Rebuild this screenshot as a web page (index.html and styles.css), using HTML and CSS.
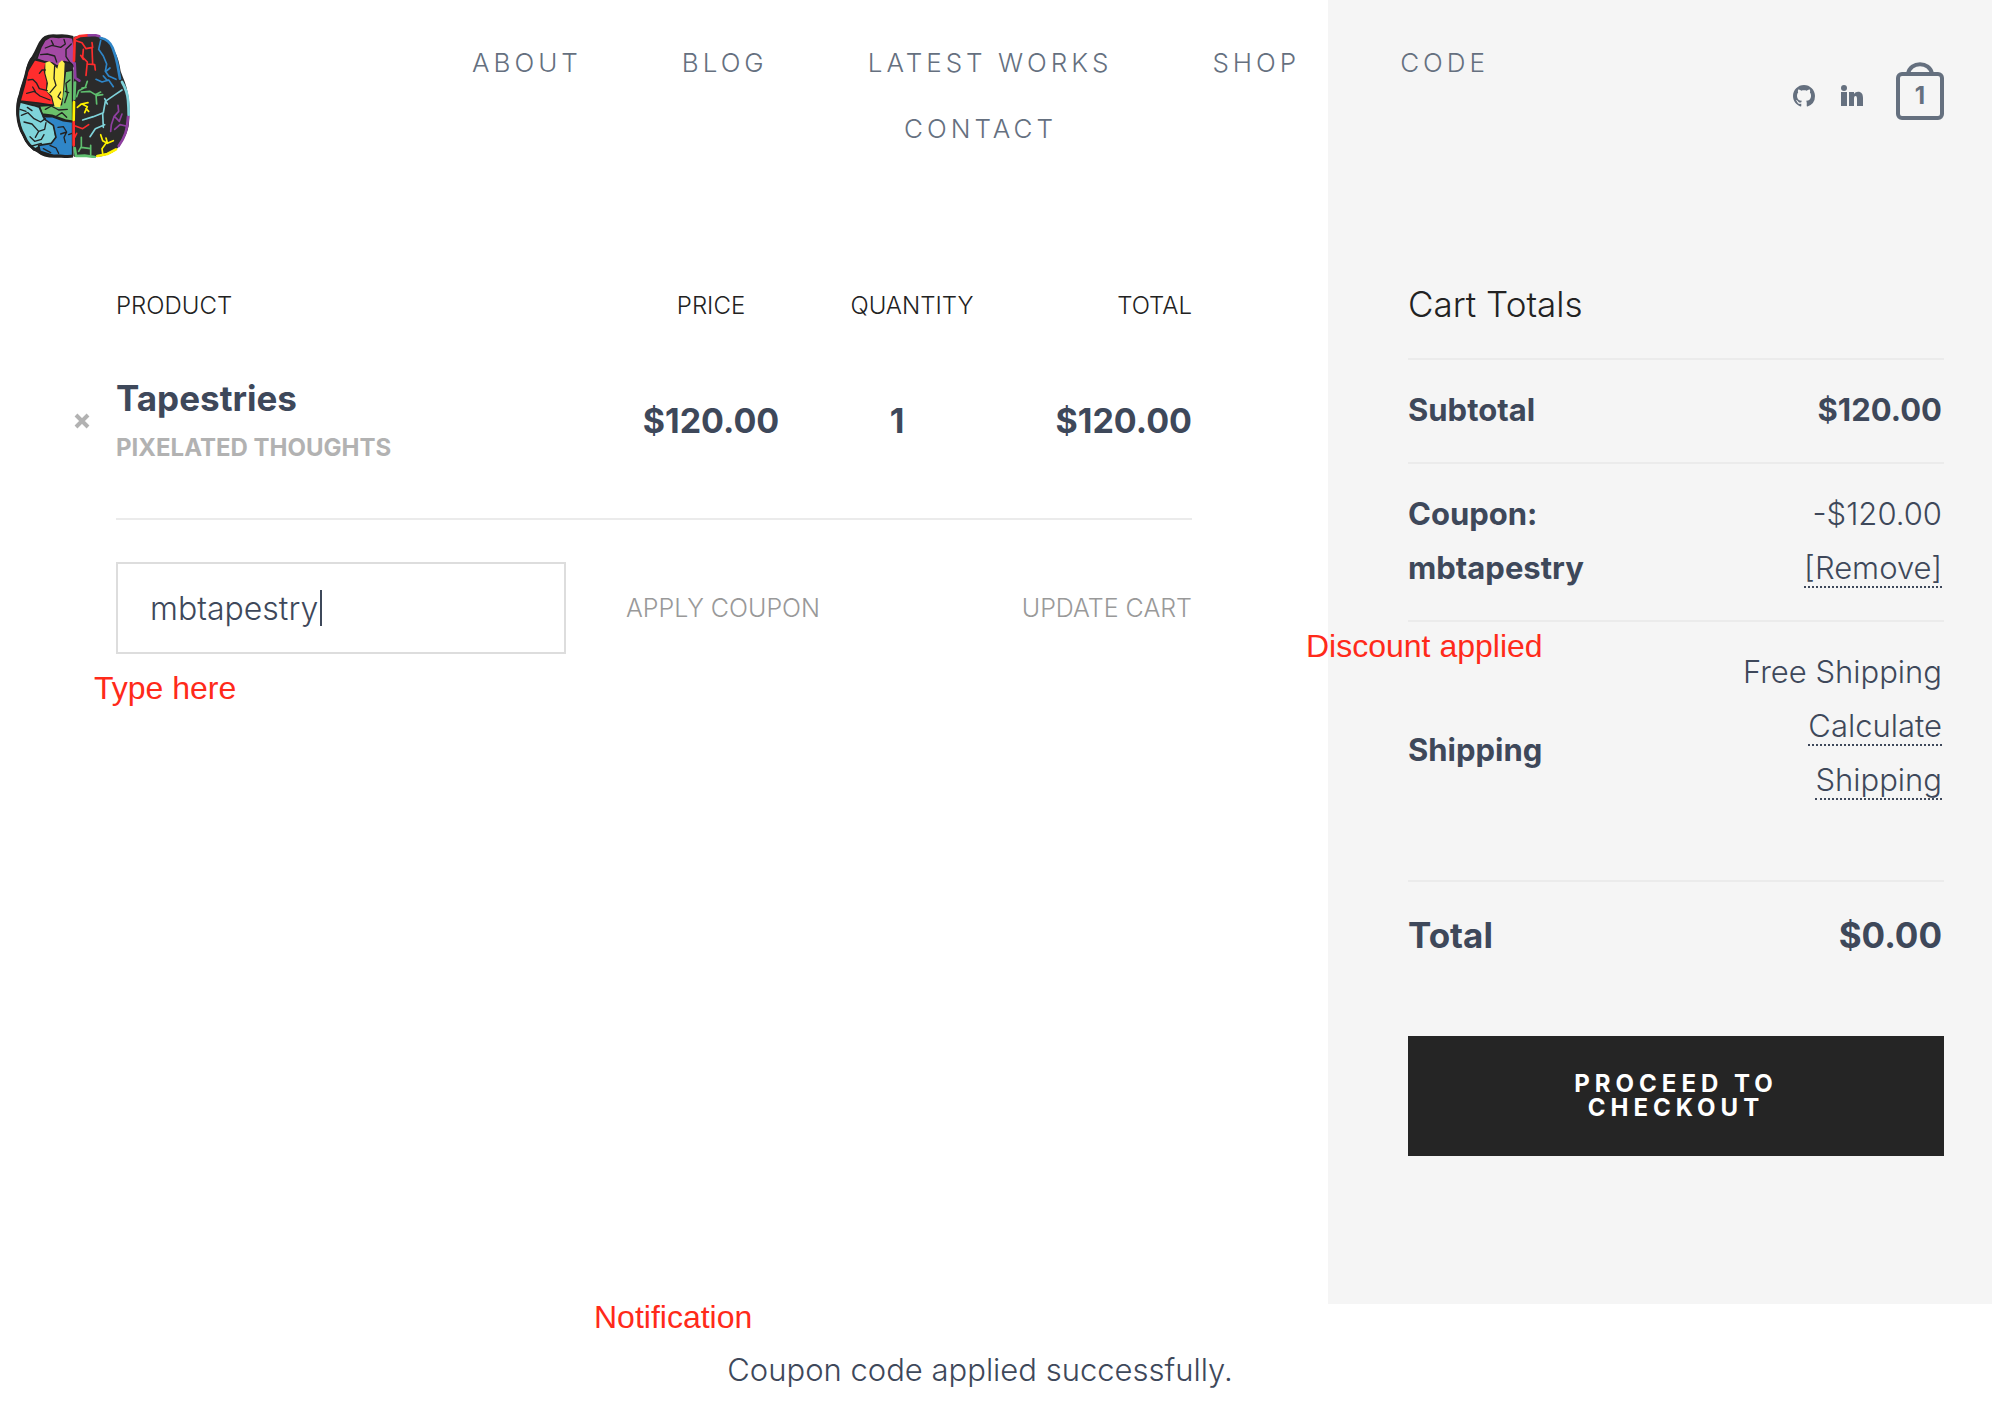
FILE: index.html
```
<!DOCTYPE html>
<html lang="en">
<head>
    <meta charset="UTF-8">
    <meta name="viewport" content="width=device-width, initial-scale=1.0">
    <title>Cart</title>
    <link rel="stylesheet" href="styles.css">
</head>
<body>
    <div class="page">
        <header class="site-header">
            <a href="/" class="logo" aria-label="Home">
                <svg width="114" height="124" viewBox="48 42 342 372">
                    <!-- left half -->
                    <path fill="#2b2b2b" d="M220 50C200 44 185 44 170 46C145 42 128 50 120 66C112 78 108 92 98 108C84 122 80 140 76 160C72 180 62 200 58 222C50 240 48 260 50 284C52 310 58 330 68 346C76 368 90 386 112 396C126 408 150 414 175 410C192 413 206 410 220 408z"/>
                    <g stroke="#222" stroke-width="5" stroke-linejoin="round">
                        <path fill="#a349a4" d="M218 52l-20-3-22 3-22-3-20 12-12 22-12 34 24 8 22 4 16 10 20-14 20 4 24 26z"/>
                        <path fill="#ff2d2d" d="M104 119l34 8-4 28 8 30-2 26 16 20 6 26-48-8-54-6 14-50 8-38z"/>
                        <path fill="#6bc06b" d="M218 150l-22 4-6 50-6 50-66 4 8 24 30 4 40 14 22 4z"/>
                        <path fill="#7fd3da" d="M60 246l40 10 18 6 12 28 30 10 8 52-14 22-34 4-18 12-22-24-16-32-10-40 2-30z"/>
                        <path fill="#2f86c8" d="M130 290l28 0 32 12 28 4v102l-60-2-38-12-4-18 38-6 14-18-8-36-26-18z"/>
                    </g>
                    <path fill="#fff04d" d="M136 128l12-4 14 12 10 10 4-16 10-9 8 9-2 40-4 60-8 32-16-2-8-32-16-14 4-24-8-30z"/>
                    <path fill="none" stroke="#222" stroke-width="9" stroke-linejoin="round" d="M219 52C200 46 185 46 170 48C145 45 130 52 122 67C114 80 110 94 100 110C87 124 83 142 79 161C75 181 65 201 61 223C54 241 52 260 53 283C55 309 61 329 71 345C79 366 92 384 114 393C128 405 150 410 175 408C192 411 206 409 219 408"/>
                    <g fill="none" stroke="#222" stroke-width="4" stroke-linecap="round" stroke-linejoin="round">
                        <path d="M136 84l20-8 26 6 14-10-4-14M122 104l20-2 22 6 6 18M214 72l-16 16 0 22 12 18M160 74l-6-12"/>
                        <path d="M118 160l8-10 10 0M84 180l14-2 12 12 8 16 24 6M80 220l22-6 18 14 30 12M106 215l-8-14"/>
                        <path d="M164 138l-2 38 6 20-18 22M182 216l-8 14 8 8M210 180l-12 10 4 34-8 24M196 214l10 4"/>
                        <path d="M136 268l18-10 22 12 26-2M170 288l16-10 14 14"/>
                        <path d="M64 286l20-8 18 18 20 10 14-10M72 306l24 6 20 22-10 18M116 334l18-6 4-20M90 350l14 14 20-6 8-14M96 378l28-8M60 268l18 6M82 262l14 10"/>
                        <path d="M174 322l16-2 10 16-8 16 4 16M182 342l18-6M150 376l18 8 8 16M130 386l22 12M206 344l10-4"/>
                    </g>
                    <!-- right half -->
                    <path fill="#2b2b2b" d="M222 50C250 42 280 44 300 50C322 58 338 74 344 94C354 112 358 130 362 154C370 176 380 196 384 222C390 250 390 290 386 318C380 344 370 362 356 380C344 398 322 406 296 410L222 410z"/>
                    <g fill="none" stroke-width="8" stroke-linecap="round" stroke-linejoin="round">
                        <path stroke="#ff2d2d" d="M222 122l2-66 16-8 22-2M221 306v70"/>
                        <path stroke="#8e3fa0" d="M266 46l18-1 14 4M224 130l2 44 12 8M384 290Q382 322 376 340T356 378"/>
                        <path stroke="#2f86c8" d="M302 54Q328 58 338 84T352 132T360 176"/>
                        <path stroke="#7fd3da" d="M366 186Q382 214 384 240T386 284"/>
                        <path stroke="#5fbf6f" d="M225 188l-2 48M224 384l4 24 26-1 30 4"/>
                        <path stroke="#fff200" d="M222 246l-1 54M292 408l30-6 26-14"/>
                    </g>
                    <g fill="none" stroke-width="5" stroke-linecap="round" stroke-linejoin="round">
                        <path stroke="#ff2d2d" d="M228 62l18 6 12 18 20-4-2-14M250 88l-2 24 14 14-4 40M262 132l22 2 2 16M250 118l-8-12M276 84l2 48M226 318l22 8 18-12M230 340l-6 12"/>
                        <path stroke="#2f86c8" d="M302 62l-6 26 14 20 10 24-4 22 10 14 22 10M318 154l12-10M288 178l18 8 20-6 14 20M322 182l-12-14"/>
                        <path stroke="#5fbf6f" d="M262 184l-6 18-20 10-6 18M244 216l26-2 16 10 16-8M288 224l2 28M292 226l16-2M258 202l-12 2M244 352l0 28-8 14M244 382l28 4 0 18M272 386v-10"/>
                        <path stroke="#fff200" d="M232 262l12-10 20-4M246 252l16 8-8 18M258 266l8 8M302 344l6 18 14 8 18-8M318 370l-12 16 2 14M322 368l-4-14"/>
                        <path stroke="#7fd3da" d="M366 210l-24 16-26 18-6 34-30 12-32 10M308 280l2 42M314 314l-28 12-16 24M322 252l-8-16"/>
                        <path stroke="#8e3fa0" d="M354 256l2 18-14 16-8 24-2 20M344 290l14 14 8-22M378 318l-18-4-16 14"/>
                    </g>
                </svg>
            </a>
            <nav class="main-nav">
                <a href="/about">ABOUT</a>
                <a href="/blog">BLOG</a>
                <a href="/latest-works">LATEST WORKS</a>
                <a href="/shop">SHOP</a>
                <a href="/code">CODE</a>
                <a href="/contact">CONTACT</a>
            </nav>
            <div class="header-icons">
                <a href="/github" aria-label="GitHub">
                    <svg width="22" height="22" viewBox="0 0 16 16" fill="currentColor"><path d="M8 0C3.58 0 0 3.58 0 8c0 3.54 2.29 6.53 5.47 7.59.4.07.55-.17.55-.38 0-.19-.01-.82-.01-1.49-2.01.37-2.53-.49-2.69-.94-.09-.23-.48-.94-.82-1.13-.28-.15-.68-.52-.01-.53.63-.01 1.08.58 1.23.82.72 1.21 1.87.87 2.33.66.07-.52.28-.87.51-1.07-1.78-.2-3.64-.89-3.64-3.95 0-.87.31-1.59.82-2.15-.08-.2-.36-1.02.08-2.12 0 0 .67-.21 2.2.82.64-.18 1.32-.27 2-.27s1.36.09 2 .27c1.53-1.04 2.2-.82 2.2-.82.44 1.1.16 1.92.08 2.12.51.56.82 1.27.82 2.15 0 3.07-1.87 3.75-3.65 3.95.29.25.54.73.54 1.48 0 1.07-.01 1.93-.01 2.2 0 .21.15.46.55.38A8.01 8.01 0 0 0 16 8c0-4.42-3.58-8-8-8z"/></svg>
                </a>
                <a href="/linkedin" aria-label="LinkedIn">
                    <svg width="22" height="22" viewBox="0 0 22 22" fill="currentColor"><circle cx="3" cy="3" r="3"/><path d="M0 7h6v14H0zM8 7h5v2c1-1.600 2.500-2.300 4-2.300 3.600 0 5 2.300 5 6.300v8h-6v-7c0-2-.4-3-1.500-3S13 12 13 14v7H8z"/></svg>
                </a>
                <a href="/cart" class="bag" aria-label="Cart">
                    <svg width="48" height="68" viewBox="0 0 48 68" fill="none" stroke="currentColor" stroke-width="4"><rect x="2" y="12" width="44" height="44" rx="4"/><path d="M12 12C14 -1 34 -1 36 12"/></svg>
                    <span class="bag-count">1</span>
                </a>
            </div>
        </header>

        <div class="cart">
            <main class="cart-items">
                <table class="products">
                    <colgroup>
                        <col class="col-remove">
                        <col class="col-product">
                        <col class="col-price">
                        <col class="col-quantity">
                        <col class="col-total">
                    </colgroup>
                    <tr>
                        <td></td>
                        <th>PRODUCT</th>
                        <th class="center">PRICE</th>
                        <th class="center">QUANTITY</th>
                        <th class="right">TOTAL</th>
                    </tr>
                    <tr class="item">
                        <td class="remove">
                            <button type="button" aria-label="Remove item">
                                <svg width="16" height="16" viewBox="0 0 16 16" stroke="currentColor" stroke-width="4"><path d="M2 2l12 12M14 2L2 14"/></svg>
                            </button>
                        </td>
                        <td>
                            <a href="/shop/tapestries" class="item-name">Tapestries</a>
                            <div class="vendor">PIXELATED THOUGHTS</div>
                        </td>
                        <td class="figure center">$120.00</td>
                        <td class="figure quantity center">1</td>
                        <td class="figure right">$120.00</td>
                    </tr>
                </table>
                <form class="coupon">
                    <div class="coupon-field">
                        <input type="text" name="coupon_code" aria-label="Coupon code" value="mbtapestry">
                    </div>
                    <button type="button">APPLY COUPON</button>
                    <button type="button" class="update">UPDATE CART</button>
                    <span class="note note-type">Type here</span>
                </form>
            </main>

            <aside class="totals">
                <h2>Cart Totals</h2>
                <table>
                    <tr>
                        <th>Subtotal</th>
                        <td><strong>$120.00</strong></td>
                    </tr>
                    <tr>
                        <th>Coupon: mbtapestry</th>
                        <td>-$120.00<br><a href="#remove">[Remove]</a></td>
                    </tr>
                    <tr class="shipping">
                        <th>Shipping</th>
                        <td>Free Shipping<br><a href="#calculate">Calculate<br>Shipping</a></td>
                    </tr>
                    <tr class="total">
                        <th>Total</th>
                        <td>$0.00</td>
                    </tr>
                </table>
                <button type="button" class="checkout">PROCEED TO CHECKOUT</button>
                <span class="note note-discount">Discount applied</span>
            </aside>
        </div>
    </div>

    <div class="notice">
        <span class="note note-notification">Notification</span>
        <p>Coupon code applied successfully.</p>
    </div>
</body>
</html>
```
FILE: styles.css
```
* {
    box-sizing: border-box;
}
body {
    margin: 0;
    font-family: Inter, "Liberation Sans", sans-serif;
    font-size: 31px;
    font-weight: 300;
    color: #3e485a;
    background-color: #fff;
}
a {
    color: inherit;
    text-decoration: none;
}
button {
    font: inherit;
    color: inherit;
    background: none;
    border: none;
    padding: 0;
    cursor: pointer;
}
svg {
    display: block;
}
/* grey sidebar runs up behind the header */
.page {
    background: linear-gradient(to right, #fff 66.667%, #f5f5f5 66.667%);
}

/* header */
.site-header {
    display: flex;
    align-items: center;
    padding: 30px 48px 30px 16px;
    color: #65707f;
}
.main-nav {
    flex: 1;
    display: flex;
    flex-wrap: wrap;
    justify-content: center;
    padding: 0 240px 0 278px;
}
.main-nav a {
    padding: 0 50px;
    font-size: 26px;
    line-height: 66px;
    letter-spacing: 4px;
}
.header-icons {
    display: flex;
    align-items: center;
    gap: 26px;
}
.bag {
    position: relative;
    margin-left: 7px;
}
.bag-count {
    position: absolute;
    top: 12px;
    left: 0;
    width: 100%;
    font-size: 24px;
    font-weight: 700;
    line-height: 44px;
    text-align: center;
}

/* cart */
.cart {
    display: grid;
    grid-template-columns: 2fr 1fr;
}
.cart-items {
    padding: 84px 136px 0 70px;
}
table {
    width: 100%;
    border-collapse: collapse;
}
th, td {
    padding: 0;
    text-align: left;
}
.products {
    table-layout: fixed;
}
.col-remove {
    width: 46px;
}
.col-price {
    width: 202px;
}
.col-quantity {
    width: 200px;
}
.col-total {
    width: 180px;
}
.products th {
    font-size: 24px;
    font-weight: 300;
    line-height: 60px;
    color: #222;
}
.products .center {
    text-align: center;
}
.products .right {
    text-align: right;
}
.item td {
    padding: 37px 0 45px;
    font-size: 34px;
    font-weight: 700;
    line-height: 50px;
    border-bottom: 2px solid #ebebeb;
}
.item .figure {
    padding-bottom: 49px;
}
.item .quantity {
    padding-right: 30px;
}
.item .remove {
    padding: 0 4px 14px;
    border-bottom: none;
    color: #b2b2b2;
}
.remove button {
    display: block;
}
.item-name {
    display: block;
    font-size: 35px;
}
.item .vendor {
    font-size: 24px;
    color: #b2b2b2;
}
.coupon {
    position: relative;
    display: flex;
    align-items: center;
    margin: 42px 0 0 46px;
    font-size: 25px;
    color: #999;
}
.coupon-field {
    position: relative;
    width: 450px;
    margin-right: 60px;
}
.coupon-field input {
    display: block;
    width: 100%;
    height: 92px;
    padding: 0 32px;
    border: 2px solid #ddd;
    background-color: #fff;
    font: inherit;
    font-size: 32px;
    color: #3e485a;
}
/* text cursor */
.coupon-field::after {
    content: "";
    position: absolute;
    top: 28px;
    left: 204px;
    width: 2px;
    height: 36px;
    background-color: #3e485a;
}
.coupon .update {
    margin-left: auto;
}

/* totals */
.totals {
    position: relative;
    padding: 84px 48px 148px 80px;
}
.totals h2 {
    margin: 0 0 26px;
    font-size: 35px;
    font-weight: 300;
    line-height: 56px;
    color: #222;
}
.totals th, .totals td {
    width: 50%;
    padding: 23px 0 25px;
    border-top: 2px solid #ebebeb;
    line-height: 54px;
}
.totals td {
    padding-right: 2px;
    text-align: right;
}
.totals strong {
    font-weight: 700;
}
.totals td a {
    border-bottom: 2px dotted #3e485a;
}
.totals .shipping td {
    padding-bottom: 73px;
}
.totals .total th, .totals .total td {
    font-size: 35px;
    font-weight: 700;
    line-height: 60px;
}
.checkout {
    display: block;
    width: 100%;
    margin-top: 46px;
    padding: 36px 120px;
    background-color: #252525;
    color: #fff;
    font-size: 24px;
    font-weight: 700;
    line-height: 24px;
    letter-spacing: 5px;
}

/* notice */
.notice {
    position: relative;
    padding: 39px 32px 0 0;
    text-align: center;
    line-height: 54px;
}
.notice p {
    margin: 0;
}

/* red notes */
.note {
    position: absolute;
    font-family: "Liberation Sans", Arial, sans-serif;
    font-size: 32px;
    font-weight: 400;
    line-height: 36px;
    color: #ff2a1a;
    white-space: nowrap;
}
.note-type {
    top: 108px;
    left: -22px;
}
.note-discount {
    top: 436px;
    left: -22px;
}
.note-notification {
    top: -5px;
    left: 594px;
}
```
